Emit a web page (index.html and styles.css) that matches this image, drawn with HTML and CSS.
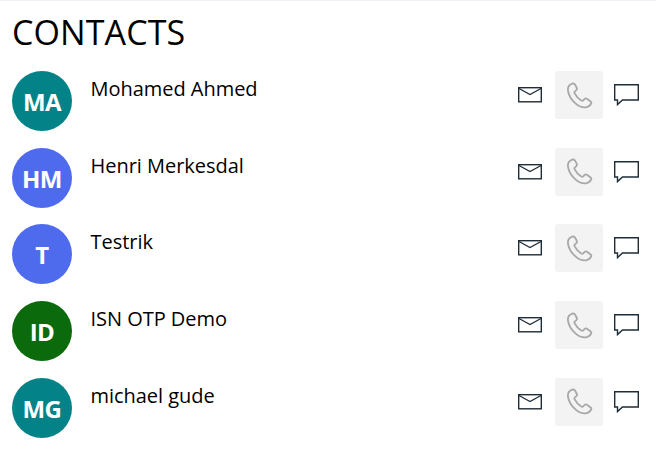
FILE: index.html
```html
<!DOCTYPE html>
<html lang="en">
<head>
<meta charset="utf-8">
<title>Contacts</title>
<link rel="stylesheet" href="styles.css">
</head>
<body>
<svg class="defs" width="0" height="0" aria-hidden="true">
  <symbol id="mail" viewBox="0 0 24 16"><rect x="0.7" y="0.7" width="22.600" height="14.100" fill="none" stroke="currentColor" stroke-width="1.400"/><path d="M1 1.500 12 7.500 23 1.500" fill="none" stroke="currentColor" stroke-width="1.300"/></symbol>
  <symbol id="phone" viewBox="0 0 24 24"><path d="M5.500 1.500C3 2.500 1.500 4.500 1.700 7.200 2.200 11.500 5 16 8.400 19c3 2.600 6.500 4 9.600 3.500 2-.3 3.600-1.600 4.400-3.400.3-.7.100-1.300-.5-1.800l-3.300-2.400c-.7-.5-1.400-.5-2 .1l-1.300 1.300c-.5.500-1.100.500-1.700.2-2.600-1.500-4.600-3.800-6-6.600-.3-.6-.2-1.200.3-1.600l1.300-1.100c.6-.5.700-1.200.4-1.900L8.100 2.400C7.600 1.500 6.500 1.100 5.500 1.500Z" fill="none" stroke="currentColor" stroke-width="1.600"/></symbol>
  <symbol id="chat" viewBox="0 0 25 22"><path d="M.7.700h23.600v15.300H8.500l-5 4.600V16H.7Z" fill="none" stroke="currentColor" stroke-width="1.400"/></symbol>
</svg>
<main class="contacts">
  <h1 class="title">CONTACTS</h1>
  <ul class="list">
    <li class="row">
      <span class="avatar teal">MA</span>
      <span class="name">Mohamed Ahmed</span>
      <span class="actions">
        <svg class="ic-mail"><use href="#mail"/></svg>
        <span class="call"><svg class="ic-phone"><use href="#phone"/></svg></span>
        <svg class="ic-chat"><use href="#chat"/></svg>
      </span>
    </li>
    <li class="row">
      <span class="avatar blue">HM</span>
      <span class="name">Henri Merkesdal</span>
      <span class="actions">
        <svg class="ic-mail"><use href="#mail"/></svg>
        <span class="call"><svg class="ic-phone"><use href="#phone"/></svg></span>
        <svg class="ic-chat"><use href="#chat"/></svg>
      </span>
    </li>
    <li class="row">
      <span class="avatar blue">T</span>
      <span class="name">Testrik</span>
      <span class="actions">
        <svg class="ic-mail"><use href="#mail"/></svg>
        <span class="call"><svg class="ic-phone"><use href="#phone"/></svg></span>
        <svg class="ic-chat"><use href="#chat"/></svg>
      </span>
    </li>
    <li class="row">
      <span class="avatar green">ID</span>
      <span class="name">ISN OTP Demo</span>
      <span class="actions">
        <svg class="ic-mail"><use href="#mail"/></svg>
        <span class="call"><svg class="ic-phone"><use href="#phone"/></svg></span>
        <svg class="ic-chat"><use href="#chat"/></svg>
      </span>
    </li>
    <li class="row">
      <span class="avatar teal">MG</span>
      <span class="name">michael gude</span>
      <span class="actions">
        <svg class="ic-mail"><use href="#mail"/></svg>
        <span class="call"><svg class="ic-phone"><use href="#phone"/></svg></span>
        <svg class="ic-chat"><use href="#chat"/></svg>
      </span>
    </li>
  </ul>
</main>
</body>
</html>
```
FILE: styles.css
```css
html, body {
  margin: 0;
  padding: 0;
  background: #fff;
}
body {
  font-family: "Open Sans", "Noto Sans", sans-serif;
  color: #000;
  height: 460px;
  overflow: hidden;
}
.defs {
  position: absolute;
}
.contacts {
  border-top: 1px solid #f3f0f7;
  padding: 0 17px 0 12px;
}
.title {
  margin: 0;
  height: 70px;
  padding-top: 9px;
  box-sizing: border-box;
  font-size: 34px;
  line-height: 44px;
  font-weight: 400;
  letter-spacing: 0.1px;
}
.list {
  list-style: none;
  margin: 0;
  padding: 0;
  display: flex;
  flex-direction: column;
  gap: 16.7px;
}
.row {
  display: flex;
  align-items: flex-start;
  height: 60px;
}
.avatar {
  width: 60px;
  height: 60px;
  flex: none;
  box-sizing: border-box;
  padding-top: 1px;
  border-radius: 50%;
  display: flex;
  align-items: center;
  justify-content: center;
  color: #fff;
  font-size: 24px;
  font-weight: 700;
  letter-spacing: -0.6px;
}
.teal { background: #038387; }
.blue { background: #4f6bed; }
.green { background: #0b6a0b; }
.name {
  margin-left: 18.500px;
  font-size: 20px;
  line-height: 35px;
  letter-spacing: -0.03px;
  flex: 1;
}
.actions {
  display: flex;
  align-items: center;
  height: 48px;
  color: #1f2d38;
}
.ic-mail {
  width: 24px;
  height: 16px;
}
.call {
  width: 48px;
  height: 48px;
  margin: 0 11px 0 13px;
  border-radius: 3px;
  background: #f3f3f3;
  color: #a8a8a8;
  display: flex;
  align-items: center;
  justify-content: center;
}
.ic-phone {
  width: 27px;
  height: 27px;
}
.ic-chat {
  width: 25px;
  height: 22px;
}
```
